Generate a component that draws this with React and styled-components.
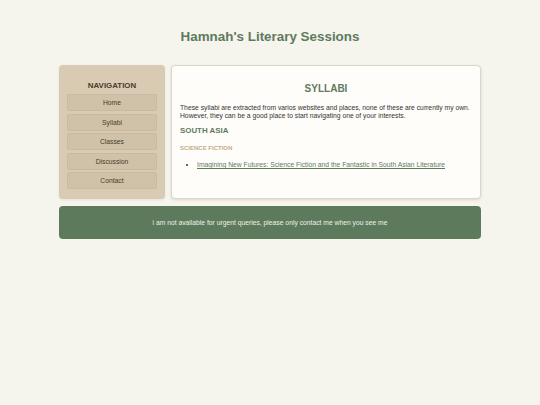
import React from "react";
import styled, { createGlobalStyle } from "styled-components";

const Global = createGlobalStyle`
  html, body { margin: 0; padding: 0; background: #f5f4ed; }
  body { font-family: "Liberation Sans", Arial, sans-serif; }
`;

const Page = styled.div`
  width: 422px;
  margin: 0 auto;
  padding-top: 29px;
`;

const Title = styled.h1`
  margin: 0 0 21px;
  text-align: center;
  font-size: 13.4px;
  line-height: 15.4px;
  font-weight: bold;
  color: #5f7a5d;
`;

const Row = styled.div`
  display: flex;
  gap: 6px;
  align-items: stretch;
`;

const Sidebar = styled.nav`
  width: 106px;
  flex: none;
  box-sizing: border-box;
  background: #d8cab3;
  border-radius: 4px;
  padding: 16px 8px 10px;
  box-shadow: 0 1px 3px rgba(0, 0, 0, 0.08);
  display: flex;
  flex-direction: column;
`;

const NavTitle = styled.h3`
  margin: 0 0 4px;
  text-align: center;
  font-size: 7.9px;
  line-height: 9px;
  font-weight: bold;
  color: #4a3b2c;
`;

const NavList = styled.div`
  display: flex;
  flex-direction: column;
  gap: 2.5px;
`;

const NavButton = styled.a`
  display: block;
  height: 17px;
  box-sizing: border-box;
  border: 1px solid #c9b9a1;
  border-radius: 2px;
  background: #d0c1a9;
  color: #4a3b2c;
  font-size: 6.75px;
  line-height: 15px;
  text-align: center;
  text-decoration: none;
`;

const Card = styled.main`
  flex: 1;
  box-sizing: border-box;
  background: #fefdf9;
  border: 1px solid #ddd6c8;
  border-radius: 4px;
  box-shadow: 0 1px 3px rgba(0, 0, 0, 0.12);
  padding: 17px 8px 29px;
  min-height: 134px;
`;

const CardTitle = styled.h2`
  margin: 0 0 9px;
  text-align: center;
  font-size: 10px;
  line-height: 11.5px;
  font-weight: bold;
  color: #5f7a5d;
`;

const Text = styled.p`
  margin: 0;
  font-size: 6.75px;
  line-height: 7.75px;
  color: #333;
`;

const Region = styled.h3`
  margin: 7px 0 0;
  font-size: 7.9px;
  line-height: 9px;
  font-weight: bold;
  color: #5f7a5d;
`;

const Genre = styled.h4`
  margin: 10px 0 0;
  font-size: 6px;
  line-height: 7px;
  font-weight: bold;
  color: #c6aa8c;
`;

const List = styled.ul`
  margin: 9px 0 0;
  padding-left: 17px;
  font-size: 6.75px;
  line-height: 7.75px;
  color: #333;
`;

const Link = styled.a`
  color: #5f7a5d;
  text-decoration: underline;
`;

const Footer = styled.footer`
  margin-top: 7px;
  height: 33px;
  border-radius: 4px;
  background: #5e7a5c;
  color: #eef0e6;
  font-size: 6.75px;
  display: flex;
  align-items: center;
  justify-content: center;
`;

export default function App() {
  return (
    <>
      <Global />
      <Page>
        <Title>Hamnah's Literary Sessions</Title>
        <Row>
          <Sidebar>
            <NavTitle>NAVIGATION</NavTitle>
            <NavList>
              {["Home", "Syllabi", "Classes", "Discussion", "Contact"].map((n) => (
                <NavButton key={n} href="#">{n}</NavButton>
              ))}
            </NavList>
          </Sidebar>
          <Card>
            <CardTitle>SYLLABI</CardTitle>
            <Text>
              These syllabi are extracted from varios websites and places, none of these are currently my own.
              However, they can be a good place to start navigating one of your interests.
            </Text>
            <Region>SOUTH ASIA</Region>
            <Genre>SCIENCE FICTION</Genre>
            <List>
              <li>
                <Link href="#">Imagining New Futures: Science Fiction and the Fantastic in South Asian Literature</Link>
              </li>
            </List>
          </Card>
        </Row>
        <Footer>i am not available for urgent queries, please only contact me when you see me</Footer>
      </Page>
    </>
  );
}
